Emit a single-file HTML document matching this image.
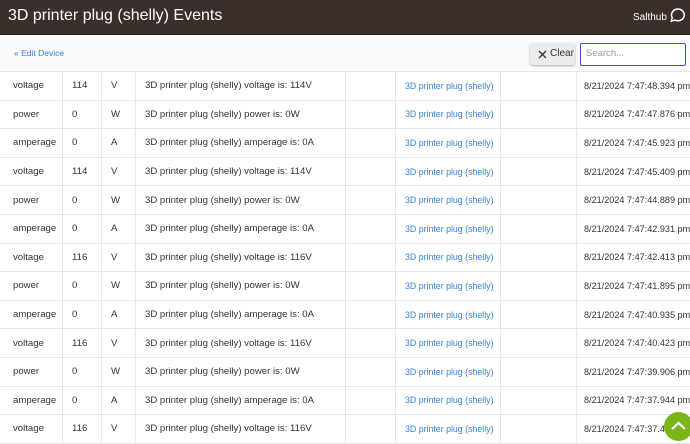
<html><head><style>
body{margin:0;width:690px;height:435px;overflow:hidden;background:#fafafa;font-family:"Liberation Sans",sans-serif;position:relative}
.hdr{position:absolute;left:0;top:0;width:690px;height:34px;background:#3a2f2b;border-bottom:1px solid #221a17}
.hdr .t{position:absolute;left:8px;top:7px;color:#fff;font-size:16px}
.hdr .s{position:absolute;left:633px;top:12px;color:#fff;font-size:10px}
a{color:#3b82d6;text-decoration:none}
.edit{position:absolute;left:14px;top:48px;font-size:8.5px}
.clear{position:absolute;left:530px;top:43px;width:45px;height:22px;background:#ececec;border-radius:3px;box-shadow:0 1px 2px rgba(0,0,0,.3);font-size:10px;color:#333}
.clear span{position:absolute;left:20px;top:5px;line-height:12px}
.search{position:absolute;left:580px;top:43px;border:1.5px solid #3f51b5;border-radius:2px;background:#fff;font-size:9.5px;color:#999;line-height:20px;padding-left:5px;box-sizing:border-box;width:106px;height:23px}
table{position:absolute;left:-1px;top:71px;border-collapse:collapse;table-layout:fixed;width:701px;background:#fff;font-size:9.6px;color:#333}
td{border:1px solid #e6e6e6;height:28.6px;padding:0 0 0 9px;box-sizing:border-box;white-space:nowrap;overflow:hidden}
td:first-child{padding-left:13px}
td:last-child{padding-left:7px;font-size:9.1px}
td a{font-size:8.8px}
.fab{position:absolute;left:664px;top:412px;width:29px;height:29px;border-radius:50%;background:#7cb518}
</style></head><body>
<div class="hdr"><div class="t">3D printer plug (shelly) Events</div><div class="s">Salthub</div>
<svg style="position:absolute;left:668px;top:7px" width="17" height="17" viewBox="0 0 16 16"><path d="M3 13.5 L4 10 A6 5.5 0 1 1 6.5 12.3 Z" fill="none" stroke="#fff" stroke-width="1.4" stroke-linejoin="round"/></svg></div>
<a class="edit">« Edit Device</a>
<div class="clear"><svg width="9" height="9" style="position:absolute;left:8px;top:7px"><path d="M1 1L8 8M8 1L1 8" stroke="#333" stroke-width="1.3"/></svg><span>Clear</span></div>
<div class="search">Search...</div>
<table>
<colgroup><col style="width:63px"><col style="width:39px"><col style="width:34px"><col style="width:210px"><col style="width:50px"><col style="width:105px"><col style="width:76px"><col style="width:124px"></colgroup>
<tr><td>voltage</td><td>114</td><td>V</td><td>3D printer plug (shelly) voltage is: 114V</td><td></td><td><a>3D printer plug (shelly)</a></td><td></td><td>8/21/2024 7:47:48.394 pm</td></tr>
<tr><td>power</td><td>0</td><td>W</td><td>3D printer plug (shelly) power is: 0W</td><td></td><td><a>3D printer plug (shelly)</a></td><td></td><td>8/21/2024 7:47:47.876 pm</td></tr>
<tr><td>amperage</td><td>0</td><td>A</td><td>3D printer plug (shelly) amperage is: 0A</td><td></td><td><a>3D printer plug (shelly)</a></td><td></td><td>8/21/2024 7:47:45.923 pm</td></tr>
<tr><td>voltage</td><td>114</td><td>V</td><td>3D printer plug (shelly) voltage is: 114V</td><td></td><td><a>3D printer plug (shelly)</a></td><td></td><td>8/21/2024 7:47:45.409 pm</td></tr>
<tr><td>power</td><td>0</td><td>W</td><td>3D printer plug (shelly) power is: 0W</td><td></td><td><a>3D printer plug (shelly)</a></td><td></td><td>8/21/2024 7:47:44.889 pm</td></tr>
<tr><td>amperage</td><td>0</td><td>A</td><td>3D printer plug (shelly) amperage is: 0A</td><td></td><td><a>3D printer plug (shelly)</a></td><td></td><td>8/21/2024 7:47:42.931 pm</td></tr>
<tr><td>voltage</td><td>116</td><td>V</td><td>3D printer plug (shelly) voltage is: 116V</td><td></td><td><a>3D printer plug (shelly)</a></td><td></td><td>8/21/2024 7:47:42.413 pm</td></tr>
<tr><td>power</td><td>0</td><td>W</td><td>3D printer plug (shelly) power is: 0W</td><td></td><td><a>3D printer plug (shelly)</a></td><td></td><td>8/21/2024 7:47:41.895 pm</td></tr>
<tr><td>amperage</td><td>0</td><td>A</td><td>3D printer plug (shelly) amperage is: 0A</td><td></td><td><a>3D printer plug (shelly)</a></td><td></td><td>8/21/2024 7:47:40.935 pm</td></tr>
<tr><td>voltage</td><td>116</td><td>V</td><td>3D printer plug (shelly) voltage is: 116V</td><td></td><td><a>3D printer plug (shelly)</a></td><td></td><td>8/21/2024 7:47:40.423 pm</td></tr>
<tr><td>power</td><td>0</td><td>W</td><td>3D printer plug (shelly) power is: 0W</td><td></td><td><a>3D printer plug (shelly)</a></td><td></td><td>8/21/2024 7:47:39.906 pm</td></tr>
<tr><td>amperage</td><td>0</td><td>A</td><td>3D printer plug (shelly) amperage is: 0A</td><td></td><td><a>3D printer plug (shelly)</a></td><td></td><td>8/21/2024 7:47:37.944 pm</td></tr>
<tr><td>voltage</td><td>116</td><td>V</td><td>3D printer plug (shelly) voltage is: 116V</td><td></td><td><a>3D printer plug (shelly)</a></td><td></td><td>8/21/2024 7:47:37.422 pm</td></tr>
</table>
<div class="fab"><svg width="29" height="29" style="position:absolute;left:0;top:0"><path d="M8 17L14.5 11L21 17" fill="none" stroke="#fff" stroke-width="2.2"/></svg></div>
</body></html>
